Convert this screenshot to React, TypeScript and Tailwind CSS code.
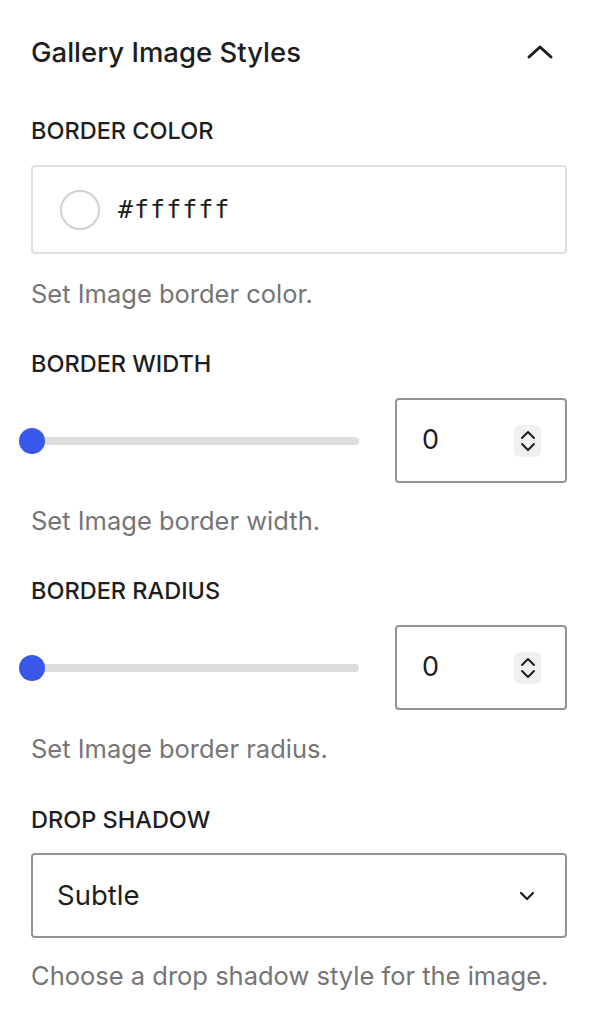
import React from 'react';

const font = { fontFamily: 'Inter, "Noto Sans", sans-serif' };

function Label({ text, className }: { text: string; className?: string }) {
  return (
    <div className={`h-[28px] leading-[28px] text-[23.5px] font-medium uppercase text-[#1e1e1e] ${className ?? ''}`}>
      {text}
    </div>
  );
}

function Help({ text, className }: { text: string; className?: string }) {
  return <p className={`h-[30px] leading-[30px] text-[25.5px] text-[#757575] ${className ?? ''}`}>{text}</p>;
}

function SpinIcon() {
  return (
    <div className="w-[27px] h-[32px] rounded-[6px] bg-[#f0f0f0] flex items-center justify-center">
      <svg width="16" height="24" viewBox="0 0 16 24" fill="none" stroke="#1e1e1e" strokeWidth="2" strokeLinecap="round" strokeLinejoin="round">
        <path d="M2 9 L8 3 L14 9" />
        <path d="M2 15 L8 21 L14 15" />
      </svg>
    </div>
  );
}

function RangeRow({ className }: { className?: string }) {
  return (
    <div className={`flex items-center h-[85px] ${className ?? ''}`}>
      <div className="relative flex-1 h-[26px] -ml-[12px]">
        <div className="absolute left-[12px] right-0 top-[9px] h-[8px] rounded-full bg-[#dddddd]" />
        <div className="absolute left-0 top-0 w-[26px] h-[26px] rounded-full bg-[#3858e9]" />
      </div>
      <div className="ml-[36px] w-[172px] h-[85px] border-2 border-[#949494] rounded-[4px] flex items-center pl-[25px] pr-[24px]">
        <span className="flex-1 text-[27px] text-[#1e1e1e]">0</span>
        <SpinIcon />
      </div>
    </div>
  );
}

export default function App() {
  return (
    <div className="w-[598px] min-h-[1024px] bg-white" style={font}>
      <div className="pl-[31px] pr-[31px] pt-[34px]">
        <div className="flex items-center justify-between h-[36px]">
          <h2 className="text-[27.5px] font-medium text-[#1e1e1e] leading-[36px]">Gallery Image Styles</h2>
          <svg width="30" height="30" viewBox="0 0 30 30" fill="none" stroke="#1e1e1e" strokeWidth="3" strokeLinecap="round" strokeLinejoin="round" className="mr-[12px]">
            <path d="M4 20 L15 10 L26 20" />
          </svg>
        </div>

        <Label text="Border color" className="mt-[47px]" />
        <div className="mt-[20px] h-[89px] border-2 border-[#e0e0e0] rounded-[4px] flex items-center pl-[27px]">
          <div className="w-[40px] h-[40px] rounded-full border-2 border-[#d0d0d0] bg-white" />
          <span className="ml-[18px] text-[25px] text-[#1e1e1e] tracking-[1px]" style={{ fontFamily: '"DejaVu Sans Mono", monospace' }}>
            #ffffff
          </span>
        </div>
        <Help text="Set Image border color." className="mt-[25px]" />

        <Label text="Border width" className="mt-[41px]" />
        <RangeRow className="mt-[20px]" />
        <Help text="Set Image border width." className="mt-[23px]" />

        <Label text="Border radius" className="mt-[41px]" />
        <RangeRow className="mt-[20px]" />
        <Help text="Set Image border radius." className="mt-[24px]" />

        <Label text="Drop shadow" className="mt-[42px]" />
        <div className="mt-[19px] h-[85px] border-2 border-[#949494] rounded-[4px] flex items-center pl-[24px] pr-[24px]">
          <span className="flex-1 text-[27.5px] text-[#1e1e1e]">Subtle</span>
          <svg width="20" height="14" viewBox="0 0 20 14" fill="none" stroke="#1e1e1e" strokeWidth="2.2" strokeLinecap="round" strokeLinejoin="round" className="mr-[4px]">
            <path d="M4 4 L10 10 L16 4" />
          </svg>
        </div>
        <Help text="Choose a drop shadow style for the image." className="mt-[23px]" />
      </div>
    </div>
  );
}
